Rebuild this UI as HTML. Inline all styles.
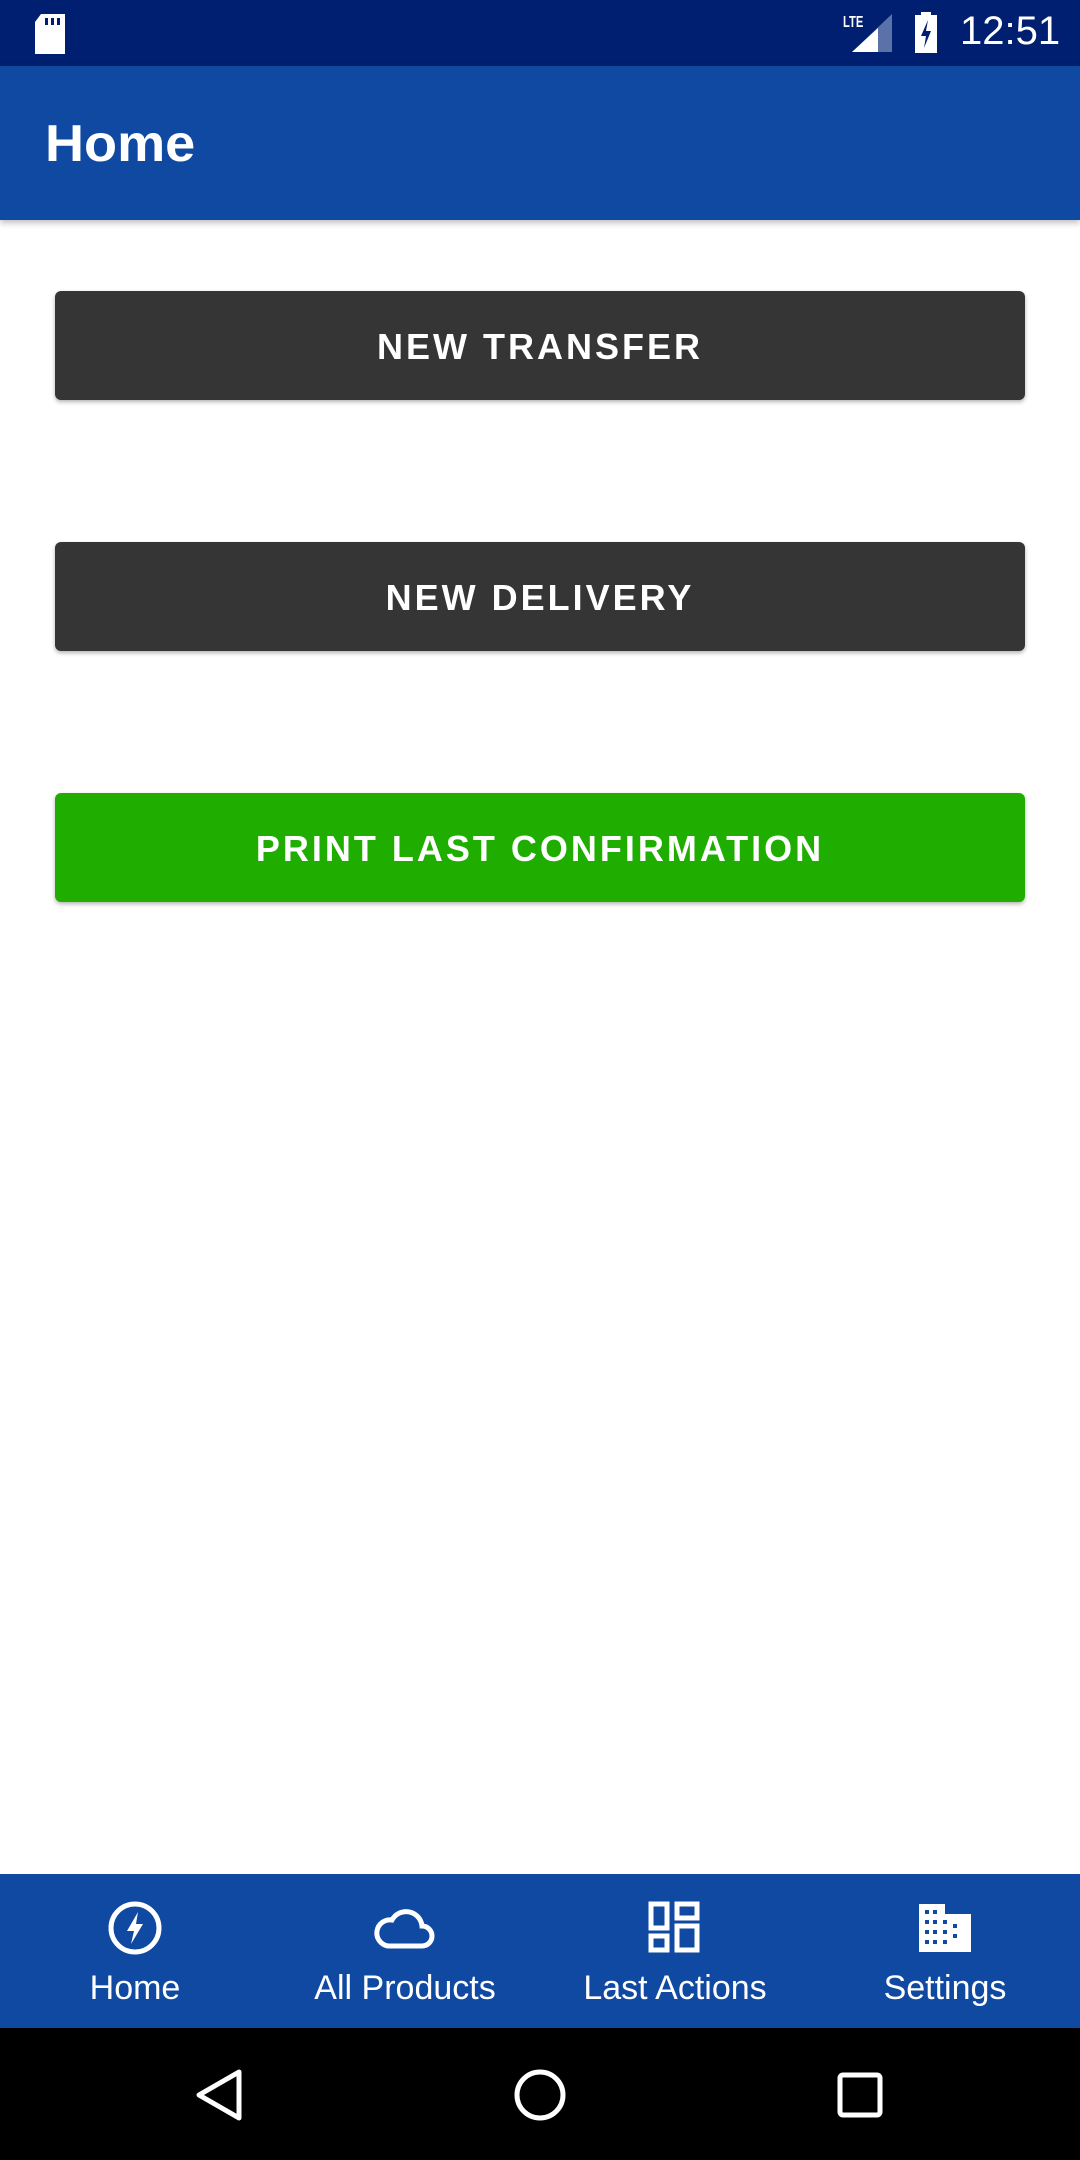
<!DOCTYPE html>
<html><head><meta charset="utf-8"><style>
*{margin:0;padding:0;box-sizing:border-box}
body{width:1080px;height:2160px;background:#fff;font-family:"Liberation Sans",sans-serif;position:relative;overflow:hidden}
.sb{position:absolute;top:0;left:0;width:1080px;height:66px;background:#001f70;color:#fff}
.ab{position:absolute;top:66px;left:0;width:1080px;height:154px;background:#0f49a2;box-shadow:0 3px 6px rgba(0,0,0,.25)}
.ab h1{position:absolute;left:45px;top:48px;font-size:52px;font-weight:bold;color:#fff;transform:scaleX(1.04);transform-origin:left}
.btn{position:absolute;left:55px;width:970px;height:109px;border-radius:6px;background:#353535;color:#fff;font-size:36px;font-weight:bold;letter-spacing:3px;text-align:center;line-height:111px;box-shadow:0 2px 4px rgba(0,0,0,.3)}
.bn{position:absolute;top:1874px;left:0;width:1080px;height:154px;background:#0f49a2}
.it{position:absolute;top:0;width:270px;height:154px;color:#fff;text-align:center}
.it svg{position:absolute;left:107px;top:26px}
.it span{position:absolute;left:0;width:270px;top:95px;font-size:34px}
.nav{position:absolute;top:2028px;left:0;width:1080px;height:132px;background:#000}
</style></head><body>
<div class="sb">
<svg style="position:absolute;left:33px;top:14px" width="34" height="40"><path d="M8 0H32V40H2V8Z" fill="#fff"/><rect x="12" y="4" width="3" height="7" fill="#001f70"/><rect x="18" y="4" width="3" height="7" fill="#001f70"/><rect x="24" y="4" width="3" height="7" fill="#001f70"/></svg>
<div style="position:absolute;left:843px;top:14px;font-size:16px;font-weight:bold;transform:scaleX(.7);transform-origin:left">LTE</div>
<svg style="position:absolute;left:852px;top:14px" width="42" height="40"><path d="M40 0V38H0Z" fill="#5a72a8"/><path d="M26 14V38H0L26 14Z" fill="#fff"/></svg>
<svg style="position:absolute;left:914px;top:12px" width="26" height="42"><rect x="7" y="0" width="10" height="4" fill="#fff"/><rect x="1" y="3" width="22" height="38" fill="#fff"/><path d="M14 8L7 24H12L10 36L17 19H12Z" fill="#001f70"/></svg>
<div style="position:absolute;left:960px;top:9px;font-size:40px">12:51</div>
</div>
<div class="ab"><h1>Home</h1></div>
<div class="btn" style="top:291px">NEW TRANSFER</div>
<div class="btn" style="top:542px">NEW DELIVERY</div>
<div class="btn" style="top:793px;background:#1fad00">PRINT LAST CONFIRMATION</div>
<div class="bn">
<div class="it" style="left:0"><svg width="56" height="56" viewBox="0 0 56 56"><circle cx="28" cy="28" r="24" fill="none" stroke="#fff" stroke-width="5"/><path d="M31 12L20 31H27L24 44L36 24H29Z" fill="#fff"/></svg><span>Home</span></div>
<div class="it" style="left:270px"><svg width="70" height="56" viewBox="0 0 70 56" style="left:100px"><path d="M18 46H52A10 10 0 0 0 52 26A16 16 0 0 0 22 20A13 13 0 0 0 18 46Z" fill="none" stroke="#fff" stroke-width="5"/></svg><span>All Products</span></div>
<div class="it" style="left:540px"><svg width="56" height="56" viewBox="0 0 56 56"><g fill="none" stroke="#fff" stroke-width="5"><rect x="4" y="4" width="16" height="24"/><rect x="30" y="4" width="20" height="14"/><rect x="4" y="36" width="16" height="14"/><rect x="30" y="26" width="20" height="24"/></g></svg><span>Last Actions</span></div>
<div class="it" style="left:810px"><svg width="56" height="56" viewBox="0 0 56 56"><path d="M2 4H28V14H54V52H2Z" fill="#fff"/><g fill="#0f49a2"><rect x="8" y="10" width="4" height="4"/><rect x="16" y="10" width="4" height="4"/><rect x="8" y="20" width="4" height="4"/><rect x="16" y="20" width="4" height="4"/><rect x="8" y="30" width="4" height="4"/><rect x="16" y="30" width="4" height="4"/><rect x="8" y="40" width="4" height="4"/><rect x="16" y="40" width="4" height="4"/><rect x="26" y="20" width="4" height="4"/><rect x="26" y="30" width="4" height="4"/><rect x="26" y="40" width="4" height="4"/><rect x="36" y="24" width="4" height="4"/><rect x="36" y="34" width="4" height="4"/></g></svg><span>Settings</span></div>
</div>
<div class="nav">
<svg style="position:absolute;left:195px;top:40px" width="50" height="54"><path d="M44 4V50L4 27Z" fill="none" stroke="#fff" stroke-width="5" stroke-linejoin="round"/></svg>
<svg style="position:absolute;left:513px;top:40px" width="54" height="54"><circle cx="27" cy="27" r="23" fill="none" stroke="#fff" stroke-width="5"/></svg>
<svg style="position:absolute;left:836px;top:43px" width="48" height="48"><rect x="4" y="4" width="40" height="40" rx="3" fill="none" stroke="#fff" stroke-width="5"/></svg>
</div>
</body></html>
